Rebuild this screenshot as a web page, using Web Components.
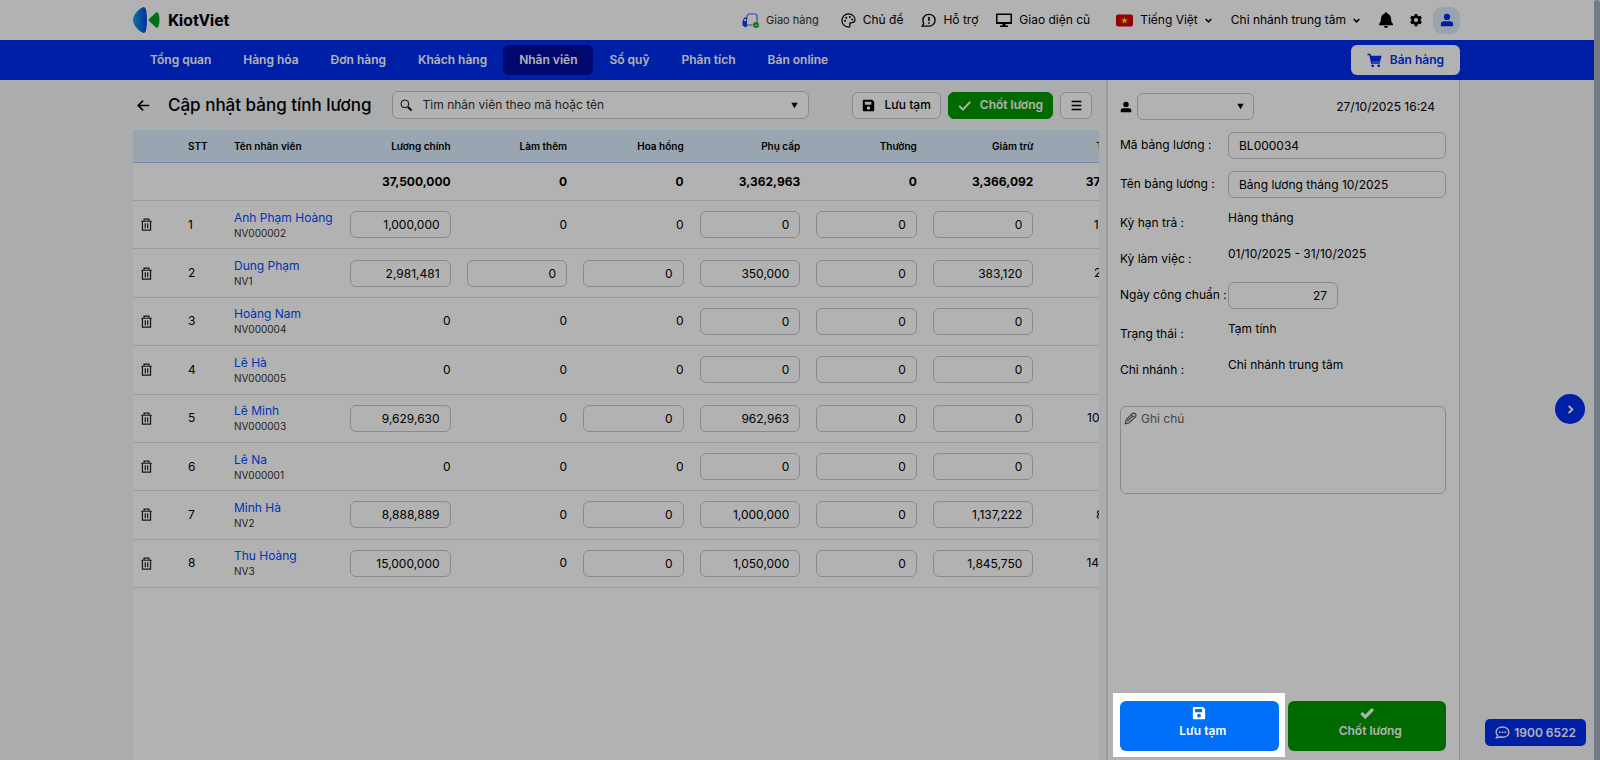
<!DOCTYPE html>
<html lang="vi">
<head>
<meta charset="utf-8">
<title>Cập nhật bảng tính lương</title>
<style>
    :root{
        --blue: #002df0;
        --navy: #000ba0;
        --green: #009900;
        --page: #f4f6f9;
        --line: #dfe1e5;
        --field: #c4c7cc;
    }
    body{
        margin: 0;
        color: #000;
        background: var(--page);
        font: 12px/16px Inter, "Liberation Sans", sans-serif;
    }
</style>
</head>
<body>
<payroll-page></payroll-page>

<!-- page frame: header, menu, content and the floating helpers -->
<template id="page">
    <style>
        :host{ display: flex; min-height: 100vh; }
        .app{ flex: 1; min-width: 0; display: flex; flex-direction: column; }
        .track{ width: 6px; background: #a6b1be; border-radius: 3px 3px 0 0; }
        main{ flex: 1; display: flex; padding: 0 134px 0 133px; }
        .list{ flex: 1; min-width: 0; display: flex; flex-direction: column; padding-right: 7px; }
        .bar{ display: flex; align-items: center; height: 50px; }
        .back{ border: 0; background: none; padding: 0 4px; display: flex; margin-right: 14px; }
        h1{ margin: 0 20px 0 0; font-size: 17px; line-height: 24px; font-weight: 500; white-space: nowrap; }
        search-box{ flex: 0 1 417px; }
        .tools{ margin-left: auto; display: flex; gap: 7px; padding-right: 7px; }
        payroll-table{ flex: 1; }
        .next{
            position: fixed; right: 15px; top: 394px;
            width: 30px; height: 30px; padding: 0; border: 0; border-radius: 50%;
            background: var(--blue); color: #fff;
            display: flex; align-items: center; justify-content: center;
        }
        .hotline{
            position: fixed; right: 14px; bottom: 14px;
            display: flex; align-items: center; gap: 4px;
            height: 27px; padding: 0 10px; border-radius: 5px;
            background: var(--blue); color: #fff; text-decoration: none;
            font-weight: 600; white-space: nowrap;
        }
    </style>
    <div class="app">
        <top-bar></top-bar>
        <main-menu></main-menu>
        <main>
            <section class="list">
                <div class="bar">
                    <button class="back" aria-label="Quay lại"><ui-icon name="back" size="13"></ui-icon></button>
                    <h1>Cập nhật bảng tính lương</h1>
                    <search-box></search-box>
                    <div class="tools">
                        <tool-button icon="save">Lưu tạm</tool-button>
                        <tool-button icon="check" class="green">Chốt lương</tool-button>
                        <tool-button icon="menu" class="only-icon"></tool-button>
                    </div>
                </div>
                <payroll-table></payroll-table>
            </section>
            <info-panel></info-panel>
        </main>
    </div>
    <div class="track"></div>
    <button class="next" aria-label="Mở rộng"><ui-icon name="right" size="9"></ui-icon></button>
    <a class="hotline" href="tel:19006522"><ui-icon name="chat" size="15"></ui-icon>1900 6522</a>
</template>

<template id="top-bar">
    <style>
        :host{ display: block; background: #fff; }
        header{ display: flex; align-items: center; height: 40px; padding: 0 134px 0 133px; }
        .logo{ display: flex; align-items: center; gap: 7px; color: #05070d; font-family: Roboto, sans-serif; font-size: 17px; font-weight: 700; text-decoration: none; }
        nav{ margin-left: auto; display: flex; align-items: center; gap: 18px; }
        nav a, button{ display: flex; align-items: center; gap: 7px; color: inherit; text-decoration: none; white-space: nowrap; }
        button{ border: 0; background: none; padding: 0; font: inherit; }
        nav .ship{ font-size: 11px; color: #333; margin-right: 4px; }
        .lang{ margin-left: 8px; margin-right: 1px; }
        .end{ display: flex; align-items: center; gap: 15px; }
        .user{ width: 27px; height: 27px; margin-left: -5px; border-radius: 9px; background: #dcebfb; color: var(--blue); justify-content: center; }
    </style>
    <header>
        <a class="logo" href="#">
            <svg width="28" height="28" viewBox="0 0 28 28">
                <defs><linearGradient id="g"><stop offset="0" stop-color="#19a5f5"/><stop offset="1" stop-color="#0044e0"/></linearGradient></defs>
                <path d="M10.500 1Q12.500 1 13 3.500Q15 14 13 24.500Q12.500 27 10.500 27Q7 26 4 22.500Q0 18 0 14Q0 10 4 5.500Q7 2 10.500 1Z" fill="url(#g)"/>
                <path d="M16 13L23 6.500Q24.500 5.500 25.500 7.500Q27.500 14 25.500 20.500Q24.500 22.500 23 21.500L16 15Q15 14 16 13Z" fill="#00a41b"/>
            </svg>
            KiotViet
        </a>
        <nav>
            <a class="ship" href="#"><ui-icon name="ship" size="17"></ui-icon>Giao hàng</a>
            <a href="#"><ui-icon name="palette" size="15"></ui-icon>Chủ đề</a>
            <a href="#"><ui-icon name="help" size="15"></ui-icon>Hỗ trợ</a>
            <a href="#"><ui-icon name="screen" size="16"></ui-icon>Giao diện cũ</a>
            <button class="lang"><ui-icon name="flag" size="17"></ui-icon>Tiếng Việt<ui-icon name="down" size="7"></ui-icon></button>
            <button>Chi nhánh trung tâm<ui-icon name="down" size="7"></ui-icon></button>
            <div class="end">
                <button aria-label="Thông báo"><ui-icon name="bell" size="16"></ui-icon></button>
                <button aria-label="Thiết lập"><ui-icon name="gear" size="14"></ui-icon></button>
                <button class="user" aria-label="Tài khoản"><ui-icon name="user" size="14"></ui-icon></button>
            </div>
        </nav>
    </header>
</template>

<template id="main-menu">
    <style>
        :host{ display: block; background: var(--blue); }
        nav{ display: flex; align-items: center; height: 40px; padding: 0 134px; }
        a{ color: #fff; font-weight: 600; text-decoration: none; line-height: 30px; padding: 0 16px; border-radius: 6px; white-space: nowrap; }
        .active{ background: var(--navy); }
        button{
            margin-left: auto; height: 30px; padding: 0 16px; border: 0; border-radius: 6px;
            display: flex; align-items: center; gap: 8px;
            background: #fff; color: var(--blue); font: inherit; font-weight: 600; white-space: nowrap;
        }
    </style>
    <nav>
        <a href="#">Tổng quan</a>
        <a href="#">Hàng hóa</a>
        <a href="#">Đơn hàng</a>
        <a href="#">Khách hàng</a>
        <a href="#" class="active">Nhân viên</a>
        <a href="#">Sổ quỹ</a>
        <a href="#">Phân tích</a>
        <a href="#">Bán online</a>
        <button><ui-icon name="cart" size="15"></ui-icon>Bán hàng</button>
    </nav>
</template>

<template id="search-box">
    <style>
        :host{ display: block; }
        label{
            display: flex; align-items: center; gap: 10px; box-sizing: border-box;
            height: 28px; padding: 0 10px 0 7px;
            border: 1px solid var(--field); border-radius: 6px; background: #fff;
        }
        input{ flex: 1; min-width: 0; border: 0; padding: 0; background: none; font: inherit; outline: 0; }
        input::placeholder{ color: #333; opacity: 1; }
    </style>
    <label>
        <ui-icon name="search" size="13"></ui-icon>
        <input type="text" placeholder="Tìm nhân viên theo mã hoặc tên" aria-label="Tìm nhân viên">
        <ui-icon name="caret" size="7"></ui-icon>
    </label>
</template>

<template id="tool-button">
    <style>
        :host{ display: block; }
        button{
            display: flex; align-items: center; gap: 9px; box-sizing: border-box;
            height: 27px; padding: 0 9px; border: 1px solid var(--field); border-radius: 6px;
            background: #fff; color: #000; font: inherit; font-weight: 500; white-space: nowrap;
        }
        :host(.green) button{ background: var(--green); border-color: var(--green); color: #fff; font-weight: 600; }
        :host(.only-icon) button{ width: 32px; padding: 0; justify-content: center; }
    </style>
    <button><ui-icon size="13"></ui-icon><slot></slot></button>
</template>

<template id="payroll-table">
    <style>
        :host{ display: block; overflow: hidden; background: #fff; }
        table{ table-layout: fixed; border-collapse: separate; border-spacing: 0; width: 100%; min-width: 1025px; height: 458px; }
        .c-del{ width: 47px; }
        .c-no{ width: 46px; }
        .c-name{ width: 116px; }
        th, td{ padding: 0 8px; text-align: right; font-weight: 400; border-bottom: 1px solid var(--line); white-space: nowrap; }
        th:nth-child(-n+3), td:nth-child(-n+3){ text-align: left; }
        thead th{ height: 32px; font-size: 10px; font-weight: 600; background: #dbecfd; border-color: #a9cbf5; }
        .total td{ height: 37px; font-weight: 700; }
        a{ display: block; color: #004cff; text-decoration: none; }
        small{ display: block; font-size: 10px; line-height: 14px; color: #333; }
        button{ display: block; border: 0; padding: 0; background: none; margin-left: -1px; color: #222; }
        input{
            box-sizing: border-box; width: 100%; height: 27px; padding: 0 10px;
            border: 1px solid var(--field); border-radius: 6px; background: #fff;
            font: inherit; text-align: right; display: block;
        }
    </style>
    <table>
        <colgroup><col class="c-del"><col class="c-no"><col class="c-name"><col><col><col><col><col><col><col></colgroup>
        <thead><tr>
            <th></th><th>STT</th><th>Tên nhân viên</th><th>Lương chính</th><th>Làm thêm</th><th>Hoa hồng</th>
            <th>Phụ cấp</th><th>Thưởng</th><th>Giảm trừ</th><th>Tổng lương</th>
        </tr></thead>
        <tbody></tbody>
    </table>
</template>

<template id="info-panel">
    <style>
        :host{
            display: flex; flex-direction: column; box-sizing: border-box; width: 354px;
            padding: 13px 12px 9px; background: #fff;
            border-left: 2px solid #dcdde0; border-right: 1px solid #c8cacd;
        }
        .head{ display: flex; align-items: center; gap: 5px; height: 27px; margin-bottom: 12px; }
        select, textarea{ box-sizing: border-box; border: 1px solid var(--field); border-radius: 6px; background: #fff; font: inherit; color: inherit; }
        .staff{ display: grid; align-items: center; }
        .staff select, .staff ui-icon{ grid-area: 1 / 1; }
        .staff ui-icon{ justify-self: end; margin-right: 10px; pointer-events: none; }
        select{ appearance: none; width: 117px; height: 27px; }
        time{ margin-left: auto; margin-right: 12px; }
        form{ flex: 1; display: flex; flex-direction: column; gap: 12px; padding-right: 1px; }
        .note{ position: relative; margin-top: 13px; height: 88px; }
        .note ui-icon{ position: absolute; left: 4px; top: 6px; color: #555; }
        textarea{ width: 100%; height: 88px; padding: 4px 20px; resize: none; display: block; }
        textarea::placeholder{ color: #666; opacity: 1; }
        .actions{ margin-top: auto; display: grid; grid-template-columns: 1fr 1fr; gap: 9px; }
    </style>
    <div class="head">
        <ui-icon name="user" size="12"></ui-icon>
        <div class="staff"><select aria-label="Nhân viên"><option></option></select><ui-icon name="caret" size="7"></ui-icon></div>
        <time>27/10/2025 16:24</time>
    </div>
    <form>
        <info-row label="Mã bảng lương :" value="BL000034" type="text"></info-row>
        <info-row label="Tên bảng lương :" value="Bảng lương tháng 10/2025" type="text"></info-row>
        <info-row label="Kỳ hạn trả :" value="Hàng tháng"></info-row>
        <info-row label="Kỳ làm việc :" value="01/10/2025 - 31/10/2025"></info-row>
        <info-row label="Ngày công chuẩn :" value="27" type="number"></info-row>
        <info-row label="Trạng thái :" value="Tạm tính"></info-row>
        <info-row label="Chi nhánh :" value="Chi nhánh trung tâm"></info-row>
        <div class="note">
            <textarea placeholder="Ghi chú" aria-label="Ghi chú"></textarea>
            <ui-icon name="pencil" size="13"></ui-icon>
        </div>
        <div class="actions">
            <guide-spot><big-button icon="save">Lưu tạm</big-button></guide-spot>
            <big-button icon="tick" class="green">Chốt lương</big-button>
        </div>
    </form>
</template>

<template id="guide-spot">
    <!-- lights the slotted button and dims the rest of the window -->
    <style>
        :host{
            display: block; position: relative; z-index: 10;
            padding: 8px 6px 6px 7px; margin: -8px -6px -6px -7px;
            background: #fff; box-shadow: 0 0 0 4000px rgba(0, 0, 0, .3);
        }
    </style>
    <slot></slot>
</template>

<template id="big-button">
    <style>
        :host{ display: block; }
        button{
            width: 100%; height: 50px; border: 0; padding: 0 0 7px; border-radius: 6px;
            display: flex; flex-direction: column; align-items: center; justify-content: center; gap: 3px;
            background: #0070f8; color: #fff; font: inherit; font-weight: 600;
        }
        span{ padding-left: 7px; }
        :host(.green) button{ background: var(--green); }
    </style>
    <button type="button"><ui-icon size="14"></ui-icon><span><slot></slot></span></button>
</template>

<script>
    // every drawing is [viewBox, markup], coloured by the text colour around it
    const icons = {
        back: ['0 0 16 16', '<path d="M15 8H2M7.500 2L1.500 8l6 6" fill="none" stroke="currentColor" stroke-width="2"/>'],
        save: ['0 0 16 16', '<path fill-rule="evenodd" d="M2 1h10.500L15 3.500V14a1 1 0 0 1-1 1H2a1 1 0 0 1-1-1V2a1 1 0 0 1 1-1zM3.500 3.500v3.500h8V3.500zM8 8.800a2.200 2.200 0 1 0 0 4.400 2.200 2.200 0 0 0 0-4.400z"/>'],
        check: ['0 0 16 16', '<path d="M1.500 8.500l4.500 4.500L15 3.500" fill="none" stroke="currentColor" stroke-width="2.400"/>'],
        tick: ['0 0 16 16', '<path d="M1.500 8l4.500 4.500L14.800 3.500" fill="none" stroke="currentColor" stroke-width="3.600"/>'],
        menu: ['0 0 16 16', '<path d="M2 3h12M2 8h12M2 13h12" stroke="currentColor" stroke-width="1.700"/>'],
        right: ['0 0 10 10', '<path d="M3 1l4 4-4 4" fill="none" stroke="currentColor" stroke-width="2.200"/>'],
        down: ['0 0 8 8', '<path d="M.8 2.300L4 5.500l3.200-3.200" fill="none" stroke="currentColor" stroke-width="1.800"/>'],
        caret: ['0 0 10 10', '<path d="M.5 1h9L5 9z"/>'],
        search: ['0 0 16 16', '<circle cx="6" cy="6" r="4.800" fill="none" stroke="currentColor" stroke-width="1.200"/><path d="M9.800 9.800l4.500 4.500" stroke="currentColor" stroke-width="2.400"/>'],
        trash: ['0 0 16 16', '<path d="M1.500 4h13M5 4V1.500h6V4M3 4v11h10V4M6.500 6.500v6M9.500 6.500v6" fill="none" stroke="currentColor" stroke-width="1.500"/>'],
        user: ['0 0 16 16', '<circle cx="8" cy="4.500" r="3.600"/><path d="M1 15v-2.500q0-3 3.500-3h7q3.500 0 3.500 3V15z"/>'],
        pencil: ['0 0 16 16', '<path d="M1.500 14.500l1-4.500 7.500-8q2-1.500 3.800.2T14 6L6 13.500zM9 3l4 4M4 11.500l6.500-6.500" fill="none" stroke="currentColor" stroke-width="1.400"/>'],
        bell: ['0 0 16 16', '<path d="M8 .3a1.200 1.200 0 0 1 1.200 1.200Q13 2.500 13 7q0 3.500 2 5v1.300H1V12q2-1.500 2-5 0-4.500 3.800-5.500A1.200 1.200 0 0 1 8 .3zM6 14h4a2 2 0 0 1-4 0z"/>'],
        gear: ['0 0 16 16', '<path fill-rule="evenodd" d="M6.500 1h3l.5 2 1.200.7 2-.6 1.500 2.700-1.500 1.500v1.400l1.500 1.500-1.500 2.700-2-.6-1.200.7-.5 2h-3l-.5-2-1.200-.7-2 .6-1.500-2.700 1.500-1.500V7.300L1.300 5.800l1.500-2.700 2 .6L6 3zM8 5.600a2.400 2.400 0 1 0 0 4.800 2.400 2.400 0 0 0 0-4.800z"/>'],
        cart: ['0 0 16 16', '<path d="M.5 1.700h2.600l2 9h8.600" fill="none" stroke="currentColor" stroke-width="1.600"/><path d="M3.500 3h12l-1.500 6.200H5z"/><circle cx="6" cy="13.700" r="1.500"/><circle cx="12.500" cy="13.700" r="1.500"/>'],
        chat: ['0 0 16 16', '<path d="M8 2.200c4 0 6.800 2.400 6.800 5.400S12 13 8 13q-1.700 0-3-.5-1.500 1.200-3.500 1.200Q2.800 12 2.700 11 1.200 9.500 1.200 7.600C1.200 4.600 4 2.200 8 2.200z" fill="none" stroke="currentColor" stroke-width="1.500"/><circle cx="5" cy="7.600" r="1"/><circle cx="8" cy="7.600" r="1"/><circle cx="11" cy="7.600" r="1"/>'],
        help: ['0 0 16 16', '<path d="M8.500 1.500c3.700 0 6.500 2.700 6.500 6.200S12.200 14 8.500 14H1.200l1.700-2.600Q2 9.800 2 7.700C2 4.200 4.800 1.500 8.500 1.500z" fill="none" stroke="currentColor" stroke-width="1.400"/><path d="M8.500 4.300v4.300M8.500 9.800v1.700" stroke="currentColor" stroke-width="1.700"/>'],
        palette: ['0 0 16 16', '<path d="M8 1c4 0 7 2.700 7 6 0 2.500-1.700 3.300-3.500 3.300-2.200 0-2.700 1-2 2.700.5 1.300-.3 2-1.500 2-4 0-7-3-7-7s3-7 7-7z" fill="none" stroke="currentColor" stroke-width="1.300"/><circle cx="4.300" cy="8.300" r="1.100"/><circle cx="5.700" cy="5" r="1.100"/><circle cx="9.500" cy="4.300" r="1.100"/><circle cx="12" cy="7" r="1.100"/>'],
        screen: ['0 0 16 16', '<path fill-rule="evenodd" d="M0 1.500h16v10.500H0zM1.500 3v7h13V3z"/><path d="M6.500 12h3v1.600H12V15H4v-1.400h2.500z"/>'],
        flag: ['0 0 17 17', '<rect y="2.500" width="17" height="12" rx="2" fill="#d80000"/><path d="M8.500 5l.9 2.500H12L9.900 9l.8 2.500-2.200-1.500-2.200 1.500.8-2.500L5 7.500h2.600z" fill="#ffea00"/>'],
        ship: ['0 0 17 17', '<path d="M5 6.500V4l1.500-2H13q2 0 2 2v6M5 13h5.500" fill="none" stroke="#2f6df2" stroke-width="1.100"/><path d="M5 5.500V14H.5V9.500L2.200 5.500z" fill="#0f46e8"/><path d="M1.800 9l1-2.200H4V9z" fill="#fff"/><circle cx="3.500" cy="13.800" r="1.500" fill="#0f46e8"/><circle cx="14" cy="13" r="3" fill="#16a832"/><path d="M12.600 13l1 1 1.700-1.700" fill="none" stroke="#fff" stroke-width=".9"/>']
    };

    class Base extends HTMLElement{
        constructor(){
            super();
            this.attachShadow({mode: "open"});
            const template = document.getElementById(this.constructor.view || this.localName);
            if(template){
                this.shadowRoot.appendChild(template.content.cloneNode(true));
            }
        }
        $(selector){
            return this.shadowRoot.querySelector(selector);
        }
    }

    class UiIcon extends Base{
        static get observedAttributes(){
            return ['name', 'size'];
        }
        attributeChangedCallback(){
            const icon = icons[this.getAttribute('name')];
            const size = this.getAttribute('size');
            if(!icon || !size) return;
            this.shadowRoot.innerHTML = `
                <style>:host{ display: block; flex: none; } svg{ display: block; }</style>
                <svg width="${size}" height="${size}" viewBox="${icon[0]}" fill="currentColor" aria-hidden="true">${icon[1]}</svg>`;
        }
    }

    class IconButton extends Base{
        connectedCallback(){
            this.$('ui-icon').setAttribute('name', this.getAttribute('icon'));
            if(this.classList.contains('only-icon')){
                this.$('button').setAttribute('aria-label', 'Tùy chọn');
            }
        }
    }

    // label on the left, text or input on the right
    class InfoRow extends Base{
        connectedCallback(){
            const type = this.getAttribute('type');
            const value = this.getAttribute('value');
            const label = this.getAttribute('label');
            this.shadowRoot.innerHTML = `
                <style>
                    :host{ display: grid; grid-template-columns: 108px 1fr; height: ${type ? 27 : 24}px; }
                    label, .label{ line-height: 26px; white-space: nowrap; }
                    input{
                        box-sizing: border-box; width: 100%; height: 27px; padding: 0 10px;
                        border: 1px solid var(--field); border-radius: 6px; background: #fff; font: inherit;
                    }
                    .number{ width: 110px; text-align: right; }
                </style>
                ${type
                    ? `<label for="field">${label}</label><input id="field" class="${type}" type="text" value="${value}">`
                    : `<span class="label">${label}</span><span>${value}</span>`}`;
        }
    }

    // a number in brackets is a box that can be edited
    const rows = [
        ['Anh Phạm Hoàng', 'NV000002', '[1,000,000]', '0', '0', '[0]', '[0]', '[0]', '1,000,000'],
        ['Dung Phạm', 'NV1', '[2,981,481]', '[0]', '[0]', '[350,000]', '[0]', '[383,120]', '2,948,361'],
        ['Hoàng Nam', 'NV000004', '0', '0', '0', '[0]', '[0]', '[0]', '0'],
        ['Lê Hà', 'NV000005', '0', '0', '0', '[0]', '[0]', '[0]', '0'],
        ['Lê Minh', 'NV000003', '[9,629,630]', '0', '[0]', '[962,963]', '[0]', '[0]', '10,592,593'],
        ['Lê Na', 'NV000001', '0', '0', '0', '[0]', '[0]', '[0]', '0'],
        ['Minh Hà', 'NV2', '[8,888,889]', '0', '[0]', '[1,000,000]', '[0]', '[1,137,222]', '8,751,667'],
        ['Thu Hoàng', 'NV3', '[15,000,000]', '0', '[0]', '[1,050,000]', '[0]', '[1,845,750]', '14,204,250']
    ];
    const totals = ['37,500,000', '0', '0', '3,362,963', '0', '3,366,092', '37,496,871'];

    class PayrollTable extends Base{
        connectedCallback(){
            const heads = [...this.shadowRoot.querySelectorAll('th')].slice(3).map(th => th.textContent);
            const cell = (value, i, name) => value[0] === '['
                ? `<td><input type="text" value="${value.slice(1, -1)}" aria-label="${heads[i]} ${name}"></td>`
                : `<td>${value}</td>`;
            this.$('tbody').innerHTML =
                `<tr class="total"><td></td><td></td><td></td>${totals.map(t => `<td>${t}</td>`).join('')}</tr>` +
                rows.map(([name, code, ...values], n) => `<tr>
                    <td><button aria-label="Xóa ${name}"><ui-icon name="trash" size="13"></ui-icon></button></td>
                    <td>${n + 1}</td>
                    <td><a href="#">${name}</a><small>${code}</small></td>
                    ${values.map((v, i) => cell(v, i, name)).join('')}
                </tr>`).join('');
        }
    }

    class PayrollPage extends Base{
        static get view(){
            return 'page';
        }
    }

    window.customElements.define('ui-icon', UiIcon);
    window.customElements.define('top-bar', class extends Base{});
    window.customElements.define('main-menu', class extends Base{});
    window.customElements.define('search-box', class extends Base{});
    window.customElements.define('tool-button', class extends IconButton{});
    window.customElements.define('big-button', class extends IconButton{});
    window.customElements.define('guide-spot', class extends Base{});
    window.customElements.define('info-row', InfoRow);
    window.customElements.define('info-panel', class extends Base{});
    window.customElements.define('payroll-table', PayrollTable);
    window.customElements.define('payroll-page', PayrollPage);
</script>
</body>
</html>
